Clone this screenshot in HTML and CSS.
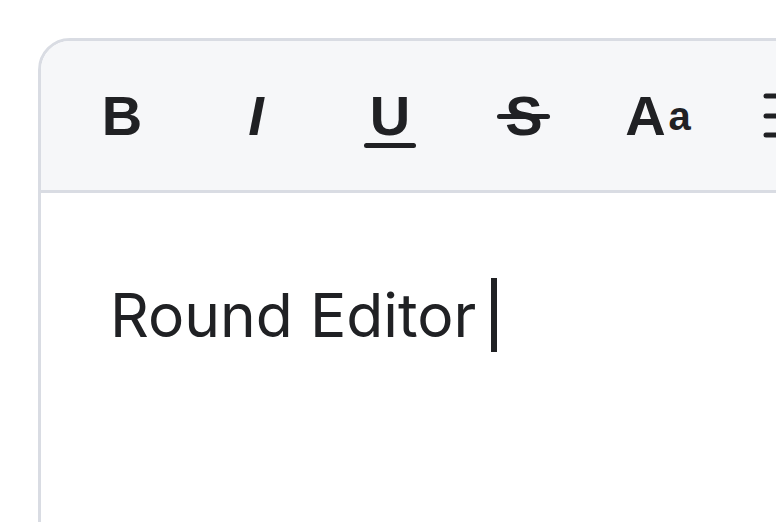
FILE: index.html
```html
<!DOCTYPE html>
<html>
<head>
<meta charset="utf-8">
<link rel="stylesheet" href="styles.css">
</head>
<body>
<div class="editor">
  <div class="toolbar">
    <span class="tool bold">B</span>
    <span class="tool italic">I</span>
    <span class="tool under"><span class="glyph">U</span></span>
    <span class="tool strike"><span class="glyph">S</span></span>
    <span class="tool case">A<span class="small">a</span></span>
    <span class="tool list">
      <svg width="54" height="48" viewBox="0 0 54 48"><g stroke="#202124" stroke-width="5" stroke-linecap="round"><line x1="3" y1="4" x2="51" y2="4"/><line x1="3" y1="24" x2="51" y2="24"/><line x1="3" y1="43" x2="51" y2="43"/></g></svg>
    </span>
  </div>
  <div class="content">
    <span class="text">Round Editor</span><span class="caret"></span>
  </div>
</div>
</body>
</html>
```
FILE: styles.css
```css
html, body {
  margin: 0;
  padding: 0;
  background: #ffffff;
  overflow: hidden;
  width: 776px;
  height: 522px;
}

.editor {
  margin: 38px 0 0 38px;
  width: 1000px;
  height: 700px;
  border: 3px solid #d9dce3;
  border-radius: 32px 32px 0 0;
  box-sizing: border-box;
  overflow: hidden;
  background: #ffffff;
}

.toolbar {
  display: flex;
  align-items: center;
  height: 149px;
  padding-left: 14px;
  background: #f6f7f9;
  border-bottom: 3px solid #d9dce3;
  font-family: "Liberation Sans", Arial, sans-serif;
  font-weight: 700;
  font-size: 56px;
  color: #202124;
}

.tool {
  flex: 0 0 134px;
  display: flex;
  justify-content: center;
  align-items: center;
  line-height: 1;
}

.italic {
  font-style: italic;
}

.under .glyph,
.strike .glyph {
  position: relative;
  display: inline-block;
}

.under .glyph::after {
  content: "";
  position: absolute;
  left: -6px;
  right: -6px;
  bottom: -4px;
  height: 5px;
  border-radius: 3px;
  background: #202124;
}

.strike .glyph::after {
  content: "";
  position: absolute;
  left: -8px;
  right: -7px;
  top: 50%;
  margin-top: -2px;
  height: 5px;
  border-radius: 3px;
  background: #202124;
}

.case .small {
  font-size: 40px;
  margin-left: 3px;
}

.list {
  justify-content: flex-start;
  padding-left: 38px;
}

.list svg {
  display: block;
}

.content {
  padding: 85px 0 0 69px;
  display: flex;
  align-items: center;
  font-family: Inter, "Noto Sans", sans-serif;
  font-size: 60.5px;
  color: #202124;
  line-height: 74px;
}

.caret {
  display: inline-block;
  width: 6px;
  height: 74px;
  margin-left: 15px;
  background: #202124;
}
```
